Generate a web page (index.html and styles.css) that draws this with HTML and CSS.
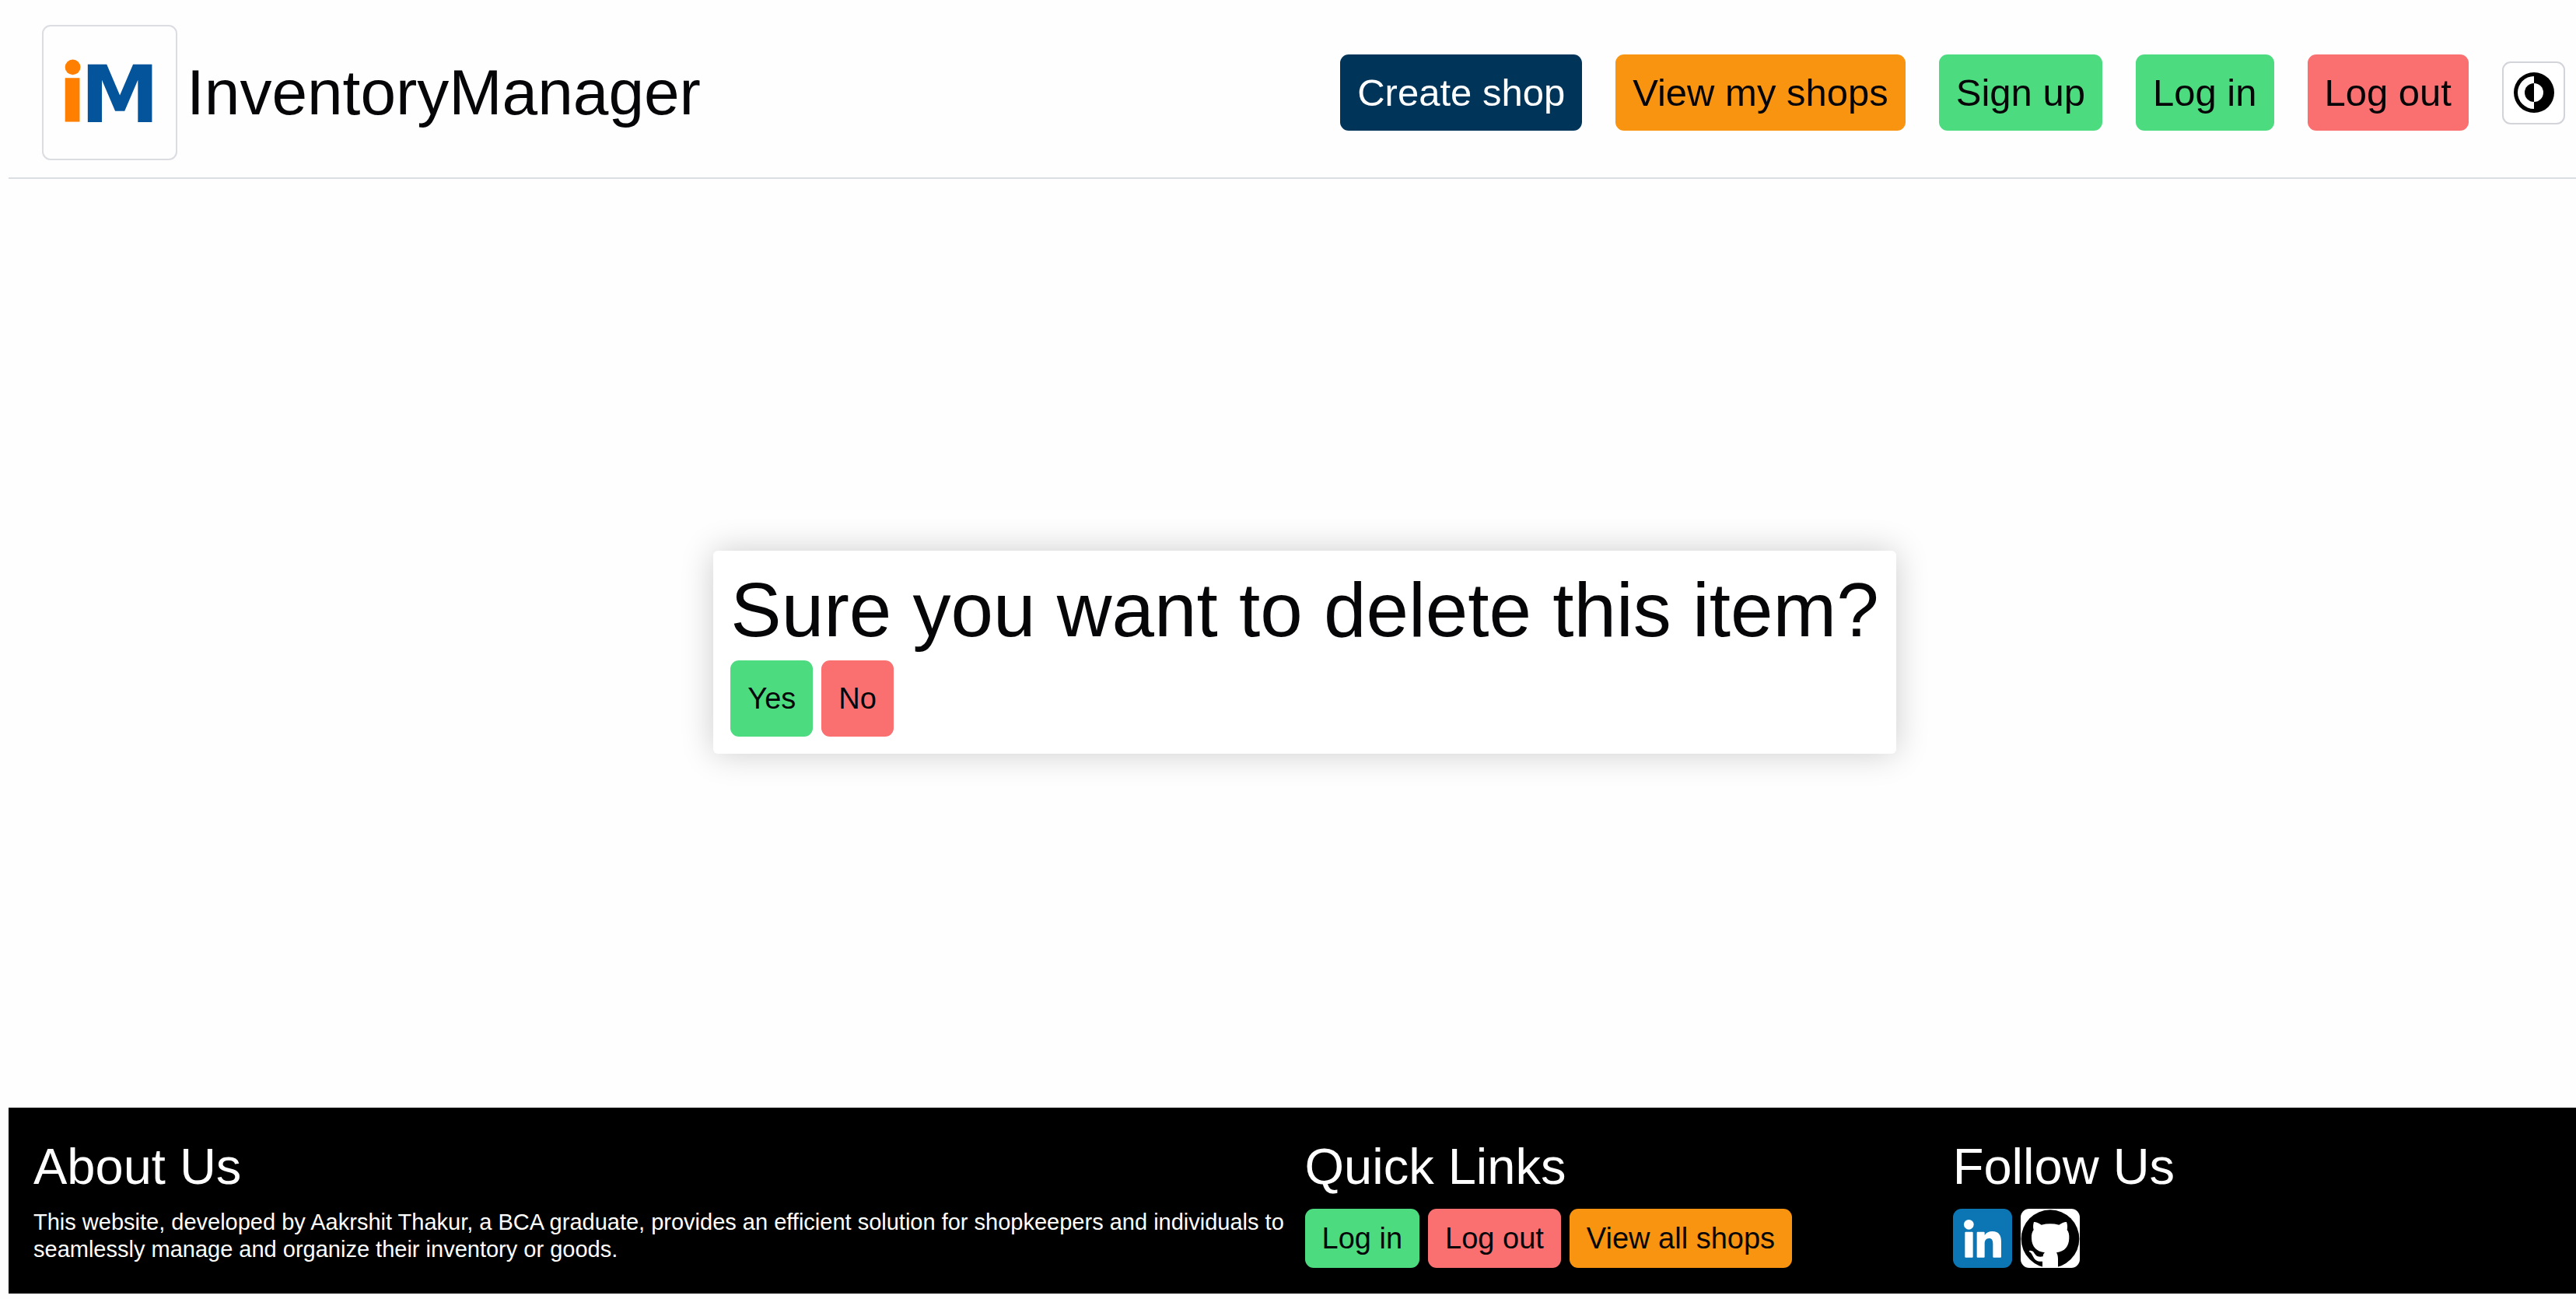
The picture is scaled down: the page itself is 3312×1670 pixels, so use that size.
FILE: index.html
```html
<!DOCTYPE html>
<html lang="en">
<head>
  <meta charset="utf-8">
  <meta name="viewport" content="width=device-width, initial-scale=1">
  <title>InventoryManager</title>
  <link rel="stylesheet" href="styles.css">
</head>
<body>
  <header class="site-header">
    <a class="brand" href="#">
      <svg class="brand-logo" viewBox="0 0 172 172" aria-hidden="true">
        <circle cx="38" cy="53" r="10" fill="#ff7f00"/>
        <rect x="28" y="67" width="19" height="57" fill="#ff7f00"/>
        <text class="logo-letter" x="48" y="124">M</text>
      </svg>
      <span class="brand-name">InventoryManager</span>
    </a>
    <nav class="main-nav" aria-label="Main">
      <a class="btn btn-large btn-navy" href="#">Create shop</a>
      <a class="btn btn-large btn-orange" href="#">View my shops</a>
      <a class="btn btn-large btn-green" href="#">Sign up</a>
      <a class="btn btn-large btn-green" href="#">Log in</a>
      <a class="btn btn-large btn-red" href="#">Log out</a>
      <button class="theme-toggle" type="button" aria-label="Toggle theme">
        <svg class="theme-icon" viewBox="0 0 52 52" aria-hidden="true">
          <circle cx="26" cy="26" r="26" fill="#000"/>
          <path d="M26 5a21 21 0 0 0 0 42z" fill="#fff"/>
          <path d="M26 14a12 12 0 0 0 0 24z" fill="#000"/>
          <path d="M26 14a12 12 0 0 1 0 24z" fill="#fff"/>
        </svg>
      </button>
    </nav>
  </header>

  <main class="content">
    <form class="confirm-card">
      <h1 class="confirm-title">Sure you want to delete this item?</h1>
      <div class="button-row">
        <button class="btn btn-tall btn-green" type="submit">Yes</button>
        <button class="btn btn-tall btn-red" type="button">No</button>
      </div>
    </form>
  </main>

  <footer class="site-footer">
    <section class="footer-column">
      <h2 class="footer-title">About Us</h2>
      <p class="footer-text">This website, developed by Aakrshit Thakur, a BCA graduate, provides an efficient solution for shopkeepers and individuals to seamlessly manage and organize their inventory or goods.</p>
    </section>
    <section class="footer-column">
      <h2 class="footer-title">Quick Links</h2>
      <div class="button-row">
        <a class="btn btn-green" href="#">Log in</a>
        <a class="btn btn-red" href="#">Log out</a>
        <a class="btn btn-orange" href="#">View all shops</a>
      </div>
    </section>
    <section class="footer-column">
      <h2 class="footer-title">Follow Us</h2>
      <div class="button-row">
        <a class="social" href="#" aria-label="LinkedIn">
          <svg class="social-icon" viewBox="0 0 228 228" aria-hidden="true">
            <rect width="228" height="228" fill="#0c76b5"/>
            <circle cx="61" cy="61" r="19" fill="#fff"/>
            <rect x="46" y="89" width="31" height="99" rx="3" fill="#fff"/>
            <path d="M95 89h24q3 0 3 3v10c6-10 17-15 30-15 25 0 34 16 34 40v58q0 3-3 3h-26q-3 0-3-3v-50c0-13-4-21-15-21-12 0-17 9-17 21v50q0 3-3 3H95q-3 0-3-3V92q0-3 3-3z" fill="#fff"/>
          </svg>
        </a>
        <a class="social" href="#" aria-label="GitHub">
          <svg class="social-icon" viewBox="0 0 228 228" aria-hidden="true">
            <rect width="228" height="228" fill="#fff"/>
            <circle cx="114" cy="116" r="112" fill="#000"/>
            <path d="M51 51C57 50 70 55 80 62Q114 54 148 62C158 55 170 50 177 51C181 62 181 73 179 81C185 89 188 101 187 114C186 145 170 165 138 169C143 177 144 185 144 196V228H84V203C66 205 55 199 49 186C44 176 40 168 32 165C33 159 43 160 50 167C58 178 62 188 86 184C86 177 89 172 93 169C61 165 43 147 42 114C41 101 44 89 50 81C47 72 48 61 51 51Z" fill="#fff"/>
          </svg>
        </a>
      </div>
    </section>
  </footer>
</body>
</html>
```
FILE: styles.css
```css
* {
  box-sizing: border-box;
  margin: 0;
}

body {
  display: flex;
  flex-direction: column;
  min-height: 100vh;
  padding: 0 0 7px 11px;
  background: #fefefe;
  color: #060608;
  font-family: "Liberation Sans", Arial, sans-serif;
  font-size: 38px;
  line-height: 54px;
}

a {
  color: inherit;
  text-decoration: none;
}

/* Header */

.site-header {
  display: flex;
  align-items: center;
  justify-content: space-between;
  padding: 32px 14px 22px 43px;
  border-bottom: 2px solid #dbdfe4;
}

.brand {
  display: flex;
  align-items: center;
  gap: 12px;
}

.brand-logo {
  width: 174px;
  height: 174px;
  border: 2px solid #dcdde2;
  border-radius: 11px;
}

.logo-letter {
  fill: #03549b;
  font-family: "DejaVu Sans", sans-serif;
  font-size: 103px;
  font-weight: 700;
}

.brand-name {
  font-size: 82px;
  line-height: 98px;
}

.main-nav {
  display: flex;
  align-items: center;
  gap: 43px;
}

.theme-toggle {
  display: flex;
  align-items: center;
  justify-content: center;
  width: 81px;
  height: 81px;
  padding: 0;
  border: 2px solid #d3d4da;
  border-radius: 11px;
  background: #fff;
}

.theme-icon {
  width: 52px;
  height: 52px;
}

/* Buttons */

.btn {
  padding: 11px 22px;
  border: 0;
  border-radius: 11px;
  font: inherit;
  color: #060608;
}

.btn-large {
  font-size: 49px;
  line-height: 76px;
}

.btn-tall {
  line-height: 76px;
}

.btn-green {
  background: #4ddb80;
}

.btn-red {
  background: #fa7070;
}

.btn-orange {
  background: #f8940f;
}

.btn-navy {
  background: #003459;
  color: #fff;
}

.button-row {
  display: flex;
  gap: 11px;
}

/* Confirmation */

.content {
  display: flex;
  flex: 1;
  align-items: center;
  justify-content: center;
  padding: 22px 0 0 32px;
}

.confirm-card {
  display: flex;
  flex-direction: column;
  gap: 11px;
  padding: 22px;
  border-radius: 6px;
  background: #fff;
  box-shadow: 0 0 43px rgba(0, 0, 0, 0.2);
}

.confirm-title {
  font-size: 98px;
  font-weight: 400;
  line-height: 108px;
}

/* Footer */

.site-footer {
  display: grid;
  grid-template-columns: 2fr 1fr 1fr;
  gap: 32px;
  padding: 32px 0 33px 32px;
  background: #000;
  color: #fff;
}

.footer-column {
  display: flex;
  flex-direction: column;
  gap: 11px;
}

.footer-title {
  font-size: 65px;
  font-weight: 400;
  line-height: 87px;
}

/* The paragraph may run a little way into the column gap. */
.footer-text {
  margin-right: -22px;
  font-size: 29px;
  line-height: 35px;
}

.social {
  overflow: hidden;
  width: 76px;
  height: 76px;
  border-radius: 11px;
}

.social-icon {
  display: block;
  width: 100%;
  height: 100%;
}
```
